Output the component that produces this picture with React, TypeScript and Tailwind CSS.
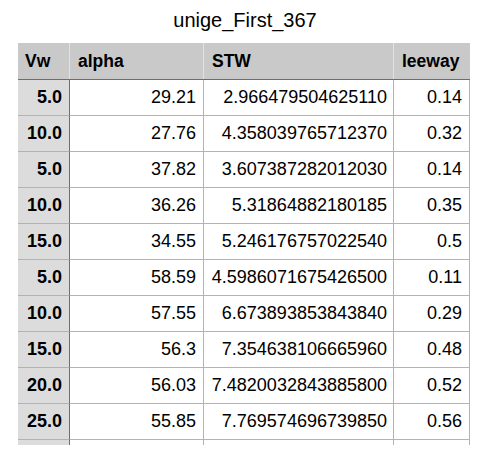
const rows: [string, string, string, string][] = [
  ["5.0", "29.21", "2.966479504625110", "0.14"],
  ["10.0", "27.76", "4.358039765712370", "0.32"],
  ["5.0", "37.82", "3.607387282012030", "0.14"],
  ["10.0", "36.26", "5.31864882180185", "0.35"],
  ["15.0", "34.55", "5.246176757022540", "0.5"],
  ["5.0", "58.59", "4.5986071675426500", "0.11"],
  ["10.0", "57.55", "6.673893853843840", "0.29"],
  ["15.0", "56.3", "7.354638106665960", "0.48"],
  ["20.0", "56.03", "7.4820032843885800", "0.52"],
  ["25.0", "55.85", "7.769574696739850", "0.56"],
  ["", "", "", ""],
];

export default function App() {
  return (
    <div
      className="w-[490px] h-[460px] bg-white text-black"
      style={{ fontFamily: '"Liberation Sans", Arial, sans-serif' }}
    >
      <div className="h-[43px] flex items-center justify-center pb-[3px] text-[20px]">
        unige_First_367
      </div>

      <div className="ml-[18px] w-[452px] h-[402px] overflow-hidden">
        {/* Header */}
        <div className="flex h-[37px] bg-[#c9c9c9] border-b border-[#6e6e6e] text-[17.5px] font-bold">
          <div className="w-[52px] flex items-center pl-[7px] border-r border-[#e2e2e2]">Vw</div>
          <div className="w-[134px] flex items-center pl-[8px] border-r border-[#e2e2e2]">alpha</div>
          <div className="w-[190px] flex items-center pl-[8px] border-r border-[#e2e2e2]">STW</div>
          <div className="w-[76px] flex items-center pl-[8px]">leeway</div>
        </div>

        {rows.map((r, i) => (
          <div key={i} className="flex h-[36px] text-[18px]">
            <div className="w-[52px] flex items-center justify-end pr-[7px] bg-[#dcdcdc] border-r border-b border-r-[#6e6e6e] border-b-[#b3b3b3] font-bold">
              {r[0]}
            </div>
            <div className="w-[134px] flex items-center justify-end pr-[7px] border-r border-b border-[#b3b3b3]">
              {r[1]}
            </div>
            <div className="w-[190px] flex items-center justify-end pr-[6px] border-r border-b border-[#b3b3b3]">
              {r[2]}
            </div>
            <div className="w-[76px] flex items-center justify-end pr-[7px] border-r border-b border-[#b3b3b3]">
              {r[3]}
            </div>
          </div>
        ))}
      </div>
    </div>
  );
}
